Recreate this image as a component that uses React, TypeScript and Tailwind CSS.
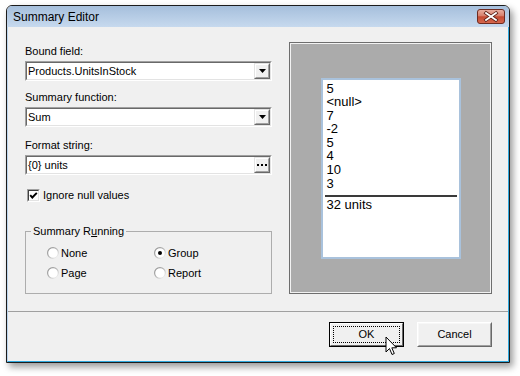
import React from "react";

function Arrow() {
  return (
    <svg width="7" height="4" viewBox="0 0 7 4">
      <path d="M0 0 H7 L3.5 4 Z" fill="#000" />
    </svg>
  );
}

function Dots() {
  return (
    <svg width="10" height="2" viewBox="0 0 10 2">
      <rect x="0" y="0" width="2" height="2" fill="#000" />
      <rect x="4" y="0" width="2" height="2" fill="#000" />
      <rect x="8" y="0" width="2" height="2" fill="#000" />
    </svg>
  );
}

function Field({ value, kind }: { value: string; kind: "arrow" | "dots" }) {
  return (
    <div className="h-[20px] border border-t-[#a0a0a0] border-l-[#a0a0a0] border-b-white border-r-white">
      <div className="h-full flex items-center bg-white border border-t-[#696969] border-l-[#696969] border-b-[#e3e3e3] border-r-[#e3e3e3]">
        <span className="flex-1 pl-[1px] text-[11px] leading-[16px] text-black">{value}</span>
        <div className="w-[16px] h-full border border-t-[#e3e3e3] border-l-[#e3e3e3] border-b-[#696969] border-r-[#696969]">
          <div className="w-full h-full bg-[#f0f0f0] border border-t-white border-l-white border-b-[#a0a0a0] border-r-[#a0a0a0] flex items-center justify-center">
            {kind === "arrow" ? <Arrow /> : <Dots />}
          </div>
        </div>
      </div>
    </div>
  );
}

function Radio({ checked, label }: { checked?: boolean; label: string }) {
  return (
    <div className="h-[14px] flex items-center gap-[2px]">
      <svg width="12" height="12" viewBox="0 0 12 12">
        <defs>
          <linearGradient id="rg" x1="0" y1="0" x2="1" y2="1">
            <stop offset="0" stopColor="#8a8a8a" />
            <stop offset="0.5" stopColor="#b8b8b8" />
            <stop offset="1" stopColor="#ffffff" />
          </linearGradient>
        </defs>
        <circle cx="6" cy="6" r="5.4" fill="#fff" stroke="url(#rg)" strokeWidth="1.2" />
        {checked && <circle cx="6" cy="6" r="2" fill="#000" />}
      </svg>
      <span className="text-[11px] leading-[14px] text-black">{label}</span>
    </div>
  );
}

function CloseButton() {
  return (
    <svg width="28" height="15" viewBox="0 0 28 15">
      <defs>
        <linearGradient id="cg" x1="0" y1="0" x2="0" y2="1">
          <stop offset="0" stopColor="#eab0a2" />
          <stop offset="0.45" stopColor="#d7806c" />
          <stop offset="0.52" stopColor="#c44a32" />
          <stop offset="1" stopColor="#d86a50" />
        </linearGradient>
      </defs>
      <rect x="0.5" y="0.5" width="27" height="14" rx="2.5" fill="url(#cg)" stroke="#6e2b20" />
      <path d="M9 4 L19 11 M19 4 L9 11" stroke="#5a1f16" strokeWidth="3.4" strokeLinecap="square" />
      <path d="M9 4 L19 11 M19 4 L9 11" stroke="#ffffff" strokeWidth="1.8" strokeLinecap="square" />
    </svg>
  );
}

function Cursor() {
  return (
    <svg
      className="absolute left-[385px] top-[336px]"
      width="14"
      height="21"
      viewBox="0 0 14 21"
    >
      <path
        d="M1 1 L1 16 L4.5 12.5 L7 18.5 L9.3 17.5 L6.8 11.8 L11.5 11.8 Z"
        fill="#fff"
        stroke="#000"
        strokeWidth="1"
        strokeLinejoin="miter"
      />
    </svg>
  );
}

export default function App() {
  const values = ["5", "<null>", "7", "-2", "5", "4", "10", "3"];
  return (
    <div className="relative w-[520px] h-[376px] bg-white overflow-hidden font-['Liberation_Sans',Arial,sans-serif] text-black">
      <div className="ml-[6px] mt-[5px] w-[504px] h-[358px] flex flex-col border border-[#1c1c1c] rounded-t-[6px] shadow-[3px_4px_7px_rgba(0,0,0,0.4)] bg-[#f0f0f0]">
        {/* Title bar */}
        <div className="h-[21px] shrink-0 flex items-center justify-between rounded-t-[5px] bg-gradient-to-b from-[#a6bfdc] to-[#c6d9ee] pl-[6px] pr-[4px]">
          <span className="text-[12px] leading-[14px] text-black">Summary Editor</span>
          <CloseButton />
        </div>
        {/* Client */}
        <div className="flex-1 flex flex-col border-l border-r border-b border-l-[#bcd6ee] border-r-[#2fa9de] border-b-[#2fa9de]">
          <div className="flex pt-[15px] pl-[17px] pr-[16px] gap-[17px]">
            {/* Left column */}
            <div className="w-[247px] flex flex-col">
              <div className="h-[19px] text-[11px] leading-[19px]">Bound field:</div>
              <Field value="Products.UnitsInStock" kind="arrow" />
              <div className="mt-[7px] h-[19px] text-[11px] leading-[19px]">Summary function:</div>
              <Field value="Sum" kind="arrow" />
              <div className="mt-[9px] h-[19px] text-[11px] leading-[19px]">Format string:</div>
              <Field value="{0} units" kind="dots" />
              <div className="mt-[14px] ml-[2px] h-[13px] flex items-center gap-[3px]">
                <div className="w-[13px] h-[13px] border border-t-[#a0a0a0] border-l-[#a0a0a0] border-b-white border-r-white">
                  <div className="w-full h-full bg-white border border-t-[#404040] border-l-[#404040] border-b-[#e3e3e3] border-r-[#e3e3e3] flex items-center justify-center">
                    <svg width="9" height="9" viewBox="0 0 9 9">
                      <path d="M1.2 4.2 L3.3 6.5 L7.8 1.8" fill="none" stroke="#000" strokeWidth="1.9" />
                    </svg>
                  </div>
                </div>
                <span className="text-[11px] leading-[13px]">Ignore null values</span>
              </div>
              <fieldset className="mt-[22px] h-[70px] border border-[#adadad]">
                <legend className="ml-[5px] px-[2px] text-[11px] leading-[14px]">
                  Summary R<span className="underline">u</span>nning
                </legend>
                <div className="mt-[8px] pl-[21px] grid grid-cols-[107px_auto] gap-y-[6px]">
                  <Radio label="None" />
                  <Radio label="Group" checked />
                  <Radio label="Page" />
                  <Radio label="Report" />
                </div>
              </fieldset>
            </div>
            {/* Preview */}
            <div className="w-[203px] h-[252px] border border-[#6e6e6e]">
              <div className="w-full h-full border border-[#f2f2f2] bg-[#ababab] flex items-center justify-center">
                <div className="w-[140px] h-[181px] bg-white border-2 border-[#a9c2dc] px-[2px] pt-[2px] flex flex-col font-['Liberation_Sans',Arial,sans-serif] text-[13px] leading-[13.6px] text-black">
                  {values.map((v, i) => (
                    <div key={i} className="pl-[2px] h-[13.6px]">
                      {v}
                    </div>
                  ))}
                  <div className="mt-[5px] h-[2px] bg-[#3a3a3a]" />
                  <div className="mt-[1px] pl-[2px]">32 units</div>
                </div>
              </div>
            </div>
          </div>
          {/* Separator */}
          <div className="mt-[17px] h-px bg-[#a0a0a0]" />
          {/* Buttons */}
          <div className="mt-[10px] flex justify-end gap-[13px] pr-[16px]">
            <div className="w-[75px] h-[25px] border border-black">
              <div className="w-full h-full bg-[#f0f0f0] border border-t-white border-l-white border-b-[#696969] border-r-[#696969] p-[2px]">
                <div className="w-full h-full border border-dotted border-black flex items-center justify-center text-[11px]">
                  OK
                </div>
              </div>
            </div>
            <div className="w-[75px] h-[25px] border border-t-white border-l-white border-b-[#696969] border-r-[#696969]">
              <div className="w-full h-full bg-[#f0f0f0] border border-t-[#f7f7f7] border-l-[#f7f7f7] border-b-[#a0a0a0] border-r-[#a0a0a0] flex items-center justify-center text-[11px]">
                Cancel
              </div>
            </div>
          </div>
        </div>
      </div>
      <Cursor />
    </div>
  );
}
